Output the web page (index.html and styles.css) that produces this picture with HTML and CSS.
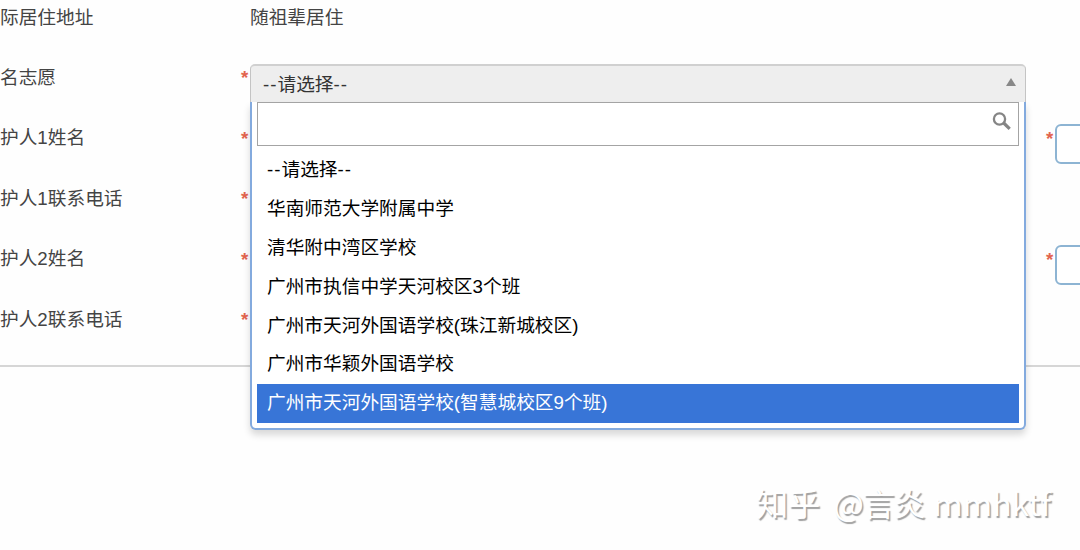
FILE: index.html
```html
<!DOCTYPE html>
<html lang="zh-CN">
<head>
    <meta charset="UTF-8">
    <meta name="viewport" content="width=device-width, initial-scale=1.0">
    <title>报名信息</title>
    <link rel="stylesheet" href="styles.css">
</head>
<body>
    <form class="form">
        <div class="row row-first">
            <label class="label">际居住地址</label>
            <span class="required"></span>
            <div class="value">随祖辈居住</div>
        </div>
        <div class="row">
            <label class="label">名志愿</label>
            <span class="required">*</span>
            <div class="select">
                <div class="select-choice">
                    <span><span class="dash">--</span>请选择<span class="dash">--</span></span>
                    <span class="arrow"></span>
                </div>
                <div class="select-drop">
                    <div class="search">
                        <svg width="20" height="20" viewBox="0 0 20 20" fill="none" stroke="#858585">
                            <circle cx="7.5" cy="7" r="5.6" stroke-width="2.3"/>
                            <path d="M11.7 11L17.7 16.8" stroke-width="3.2"/>
                        </svg>
                    </div>
                    <ul class="results">
                        <li><span class="dash">--</span>请选择<span class="dash">--</span></li>
                        <li>华南师范大学附属中学</li>
                        <li>清华附中湾区学校</li>
                        <li>广州市执信中学天河校区3个班</li>
                        <li>广州市天河外国语学校(珠江新城校区)</li>
                        <li>广州市华颖外国语学校</li>
                        <li class="highlighted">广州市天河外国语学校(智慧城校区9个班)</li>
                    </ul>
                </div>
            </div>
        </div>
        <div class="row">
            <label class="label">护人1姓名</label>
            <span class="required">*</span>
            <div class="value"></div>
            <span class="required">*</span>
            <div class="input"></div>
        </div>
        <div class="row">
            <label class="label">护人1联系电话</label>
            <span class="required">*</span>
        </div>
        <div class="row">
            <label class="label">护人2姓名</label>
            <span class="required">*</span>
            <div class="value"></div>
            <span class="required">*</span>
            <div class="input"></div>
        </div>
        <div class="row">
            <label class="label">护人2联系电话</label>
            <span class="required">*</span>
        </div>
    </form>
    <div class="divider"></div>
    <div class="watermark">知乎 <span class="author">@言炎</span> mmhktf</div>
</body>
</html>
```
FILE: styles.css
```css
* {
    margin: 0;
    padding: 0;
    box-sizing: border-box;
}

body {
    position: relative;
    height: 550px;
    overflow: hidden;
    background: #fefefe;
    color: #444;
    font-family: "Liberation Sans", "Noto Sans CJK SC", sans-serif;
    font-size: 18.7px;
    line-height: 28px;
}

.row {
    display: grid;
    grid-template-columns: 240px 10px 795px 10px 60px;
    height: 60.5px;
}

.row-first {
    height: 47px;
}

.label,
.value {
    padding-top: 16.5px;
}

.row-first > * {
    padding-top: 4px;
}

.required {
    color: #e2654f;
    font-weight: bold;
    padding-left: 1px;
    padding-top: 17px;
}

.input {
    height: 40px;
    margin-top: 16px;
    border: 2px solid #8db4d3;
    border-radius: 6px;
    background: #fff;
}

.select {
    position: relative;
    z-index: 10;
    width: 776px;
    margin-top: 17px;
}

.select-choice {
    display: flex;
    justify-content: space-between;
    align-items: center;
    height: 38px;
    padding: 1px 9px 0 12px;
    background: #eee;
    border: 1px solid #c4c4c4;
    border-top: 2px solid #d0d0d0;
    border-bottom: 0;
    border-radius: 5px 5px 0 0;
    color: #333;
}

.arrow {
    margin-bottom: 5px;
    border: 5px solid transparent;
    border-top: 0;
    border-bottom: 8px solid #888;
}

.dash {
    letter-spacing: 1px;
}

.select-drop {
    position: absolute;
    top: 38px;
    left: 0;
    width: 100%;
    height: 328px;
    padding: 0 5px;
    background: #fff;
    border: 2px solid #83aade;
    border-top: 0;
    border-radius: 0 0 6px 6px;
    box-shadow: 0 5px 7px rgba(0, 0, 0, 0.15);
    color: #000;
}

.search {
    display: flex;
    justify-content: flex-end;
    height: 44px;
    padding: 9px 6px 0;
    border: 1px solid #a4a4a4;
}

.results {
    margin-top: 5px;
    list-style: none;
}

.results li {
    height: 38.9px;
    padding-left: 10px;
    line-height: 37px;
}

.results .highlighted {
    background: #3875d7;
    color: #fff;
}

.divider {
    margin-top: 15px;
    border-top: 2px solid #d6d6d6;
}

.watermark {
    position: absolute;
    right: 29px;
    bottom: 24px;
    color: #fff;
    font-family: "Noto Sans CJK SC", sans-serif;
    font-size: 32px;
    line-height: 48px;
    text-shadow: 1.5px 1.5px 1px #a0a0a0;
}

.author {
    margin-left: 6px;
    margin-right: 1px;
    letter-spacing: -1px;
}
```
